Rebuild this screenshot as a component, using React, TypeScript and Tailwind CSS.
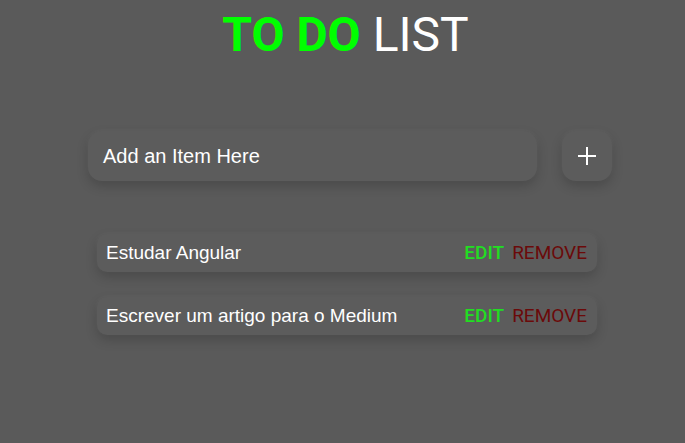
const items = ['Estudar Angular', 'Escrever um artigo para o Medium']

export default function App() {
  return (
    <div className="min-h-[443px] w-full bg-[#5a5a5a] pt-[11px]" style={{ fontFamily: 'Arial, "Liberation Sans", sans-serif' }}>
      <h1 className="text-center text-[48px] leading-[48px] font-['Roboto',sans-serif] pl-[6px]">
        <span className="font-bold text-[#00ff00]">TO DO</span>{' '}
        <span className="font-normal text-white">LIST</span>
      </h1>

      <div className="ml-[88px] mt-[72px] w-[524px]">
        {/* input + botón */}
        <div className="flex gap-[25px]">
          <div className="flex h-[50px] flex-1 items-center rounded-[14px] bg-[#5c5c5c] px-[15px] text-[20px] text-white shadow-[0_5px_12px_rgba(0,0,0,0.18),0_-1px_4px_rgba(255,255,255,0.05)]">
            Add an Item Here
          </div>
          <button className="flex h-[50px] w-[50px] items-center justify-center rounded-[14px] bg-[#5c5c5c] shadow-[0_5px_12px_rgba(0,0,0,0.18),0_-1px_4px_rgba(255,255,255,0.05)]">
            <svg width="20" height="20" viewBox="0 0 20 20">
              <path d="M10 1v18M1 10h18" stroke="white" strokeWidth="2" />
            </svg>
          </button>
        </div>

        {/* lista */}
        <div className="ml-[9px] mt-[53px] flex w-[500px] flex-col gap-[25px]">
          {items.map(item => (
            <div
              key={item}
              className="flex h-[38px] items-center justify-between rounded-[10px] bg-[#5c5c5c] pl-[9px] pr-[10px] shadow-[0_5px_12px_rgba(0,0,0,0.18),0_-1px_4px_rgba(255,255,255,0.05)]"
            >
              <span className="text-[19px] text-white">{item}</span>
              <div className="flex gap-[8px] font-['Roboto',sans-serif] text-[19px]">
                <span className="font-medium text-[#22dd22]">EDIT</span>
                <span className="text-[#6b0a0a]">REMOVE</span>
              </div>
            </div>
          ))}
        </div>
      </div>
    </div>
  )
}
